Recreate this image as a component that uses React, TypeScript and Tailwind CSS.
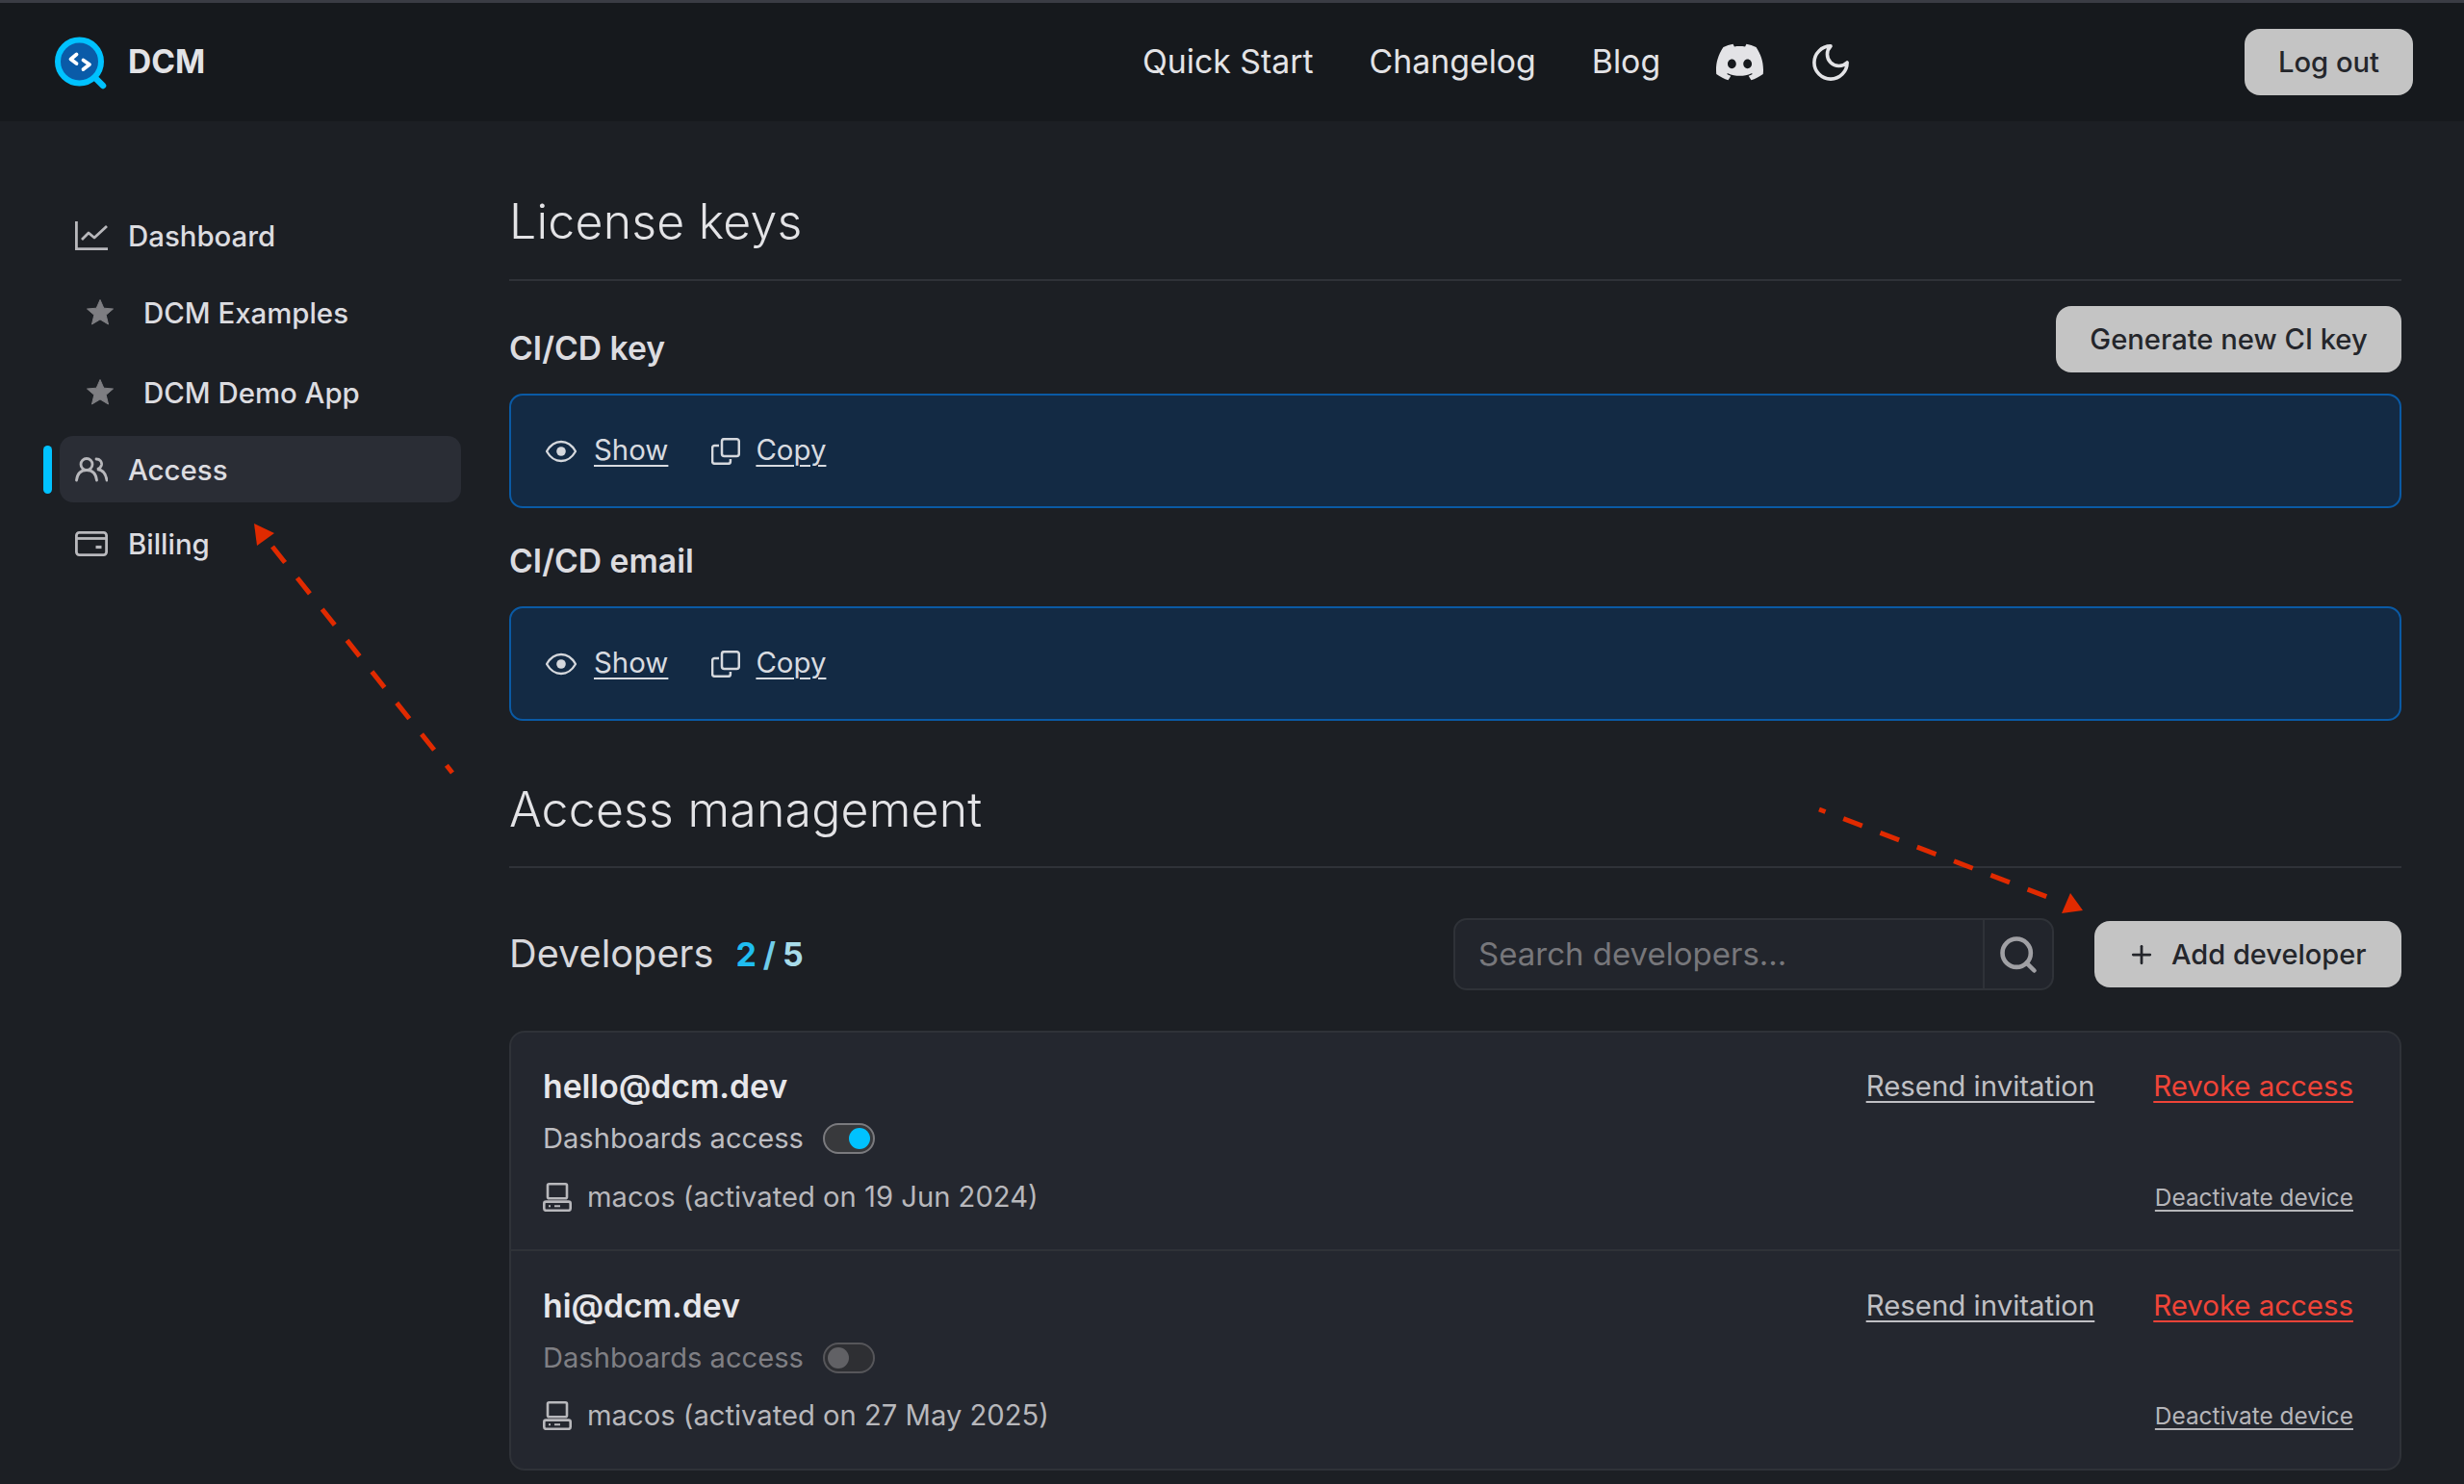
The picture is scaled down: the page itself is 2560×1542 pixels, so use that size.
import { Search, Plus } from "lucide-react";
import { SiDiscord } from "react-icons/si";

function Logo() {
  return (
    <svg width="56" height="56" viewBox="0 0 56 56" className="shrink-0">
      <line x1="43" y1="44" x2="51" y2="52" stroke="#00c2ff" strokeWidth="6.5" strokeLinecap="round" />
      <circle cx="26.5" cy="27" r="22.5" fill="#0a5ba8" stroke="#00c2ff" strokeWidth="6" />
      <path d="M23.5 19.5 L17.5 24.5 L23.5 29" fill="none" stroke="#fff" strokeWidth="3.8" strokeLinecap="round" strokeLinejoin="round" />
      <path d="M30.5 25.5 L37 30 L30.5 35" fill="none" stroke="#fff" strokeWidth="3.8" strokeLinecap="round" strokeLinejoin="round" />
    </svg>
  );
}

function MoonIcon() {
  return (
    <svg width="38" height="38" viewBox="2 2 20 20" fill="none" stroke="#e3e3e6" strokeWidth="1.9" strokeLinejoin="round" className="ml-[-7px]">
      <path d="M12 3a6 6 0 0 0 9 9 9 9 0 1 1-9-9Z" />
    </svg>
  );
}

function ChartIcon() {
  return (
    <svg width="34" height="30" viewBox="0 0 34 30" fill="none" stroke="#b8b8bc" strokeWidth="2.8">
      <path d="M1.4 0 V28.6 H34" />
      <path d="M7 19 L14 12 L20 17 L33 5" strokeLinejoin="round" />
    </svg>
  );
}

function UsersIcon() {
  return (
    <svg width="34" height="26" viewBox="0 0 34 26" fill="none" stroke="#b8b8bc" strokeWidth="2.8" strokeLinecap="round">
      <circle cx="12" cy="7.5" r="6" />
      <path d="M1.5 24 C2.5 16 7 13.5 12 13.5 C17 13.5 21.5 16 22.5 24" />
      <path d="M22 2 C26 2 28 5 27.5 8 C27 10.5 25 12 23 12.5 C28 13 32 17 33 24" />
    </svg>
  );
}

function CardIcon() {
  return (
    <svg width="34" height="26" viewBox="0 0 34 26" fill="none" stroke="#b8b8bc" strokeWidth="2.8">
      <rect x="1.4" y="1.4" width="31.2" height="23.2" rx="3" />
      <path d="M1.4 7.5 H32.6" />
      <path d="M21.5 16.5 H27.5" strokeWidth="3.2" />
    </svg>
  );
}

function StarIcon() {
  return (
    <svg width="28" height="27" viewBox="0 0 28 27" fill="#7e7e82">
      <path d="M14 0.5 L17.8 9.2 L27.5 10 L20.2 16.3 L22.5 26 L14 20.9 L5.5 26 L7.8 16.3 L0.5 10 L10.2 9.2 Z" stroke="#7e7e82" strokeWidth="1" strokeLinejoin="round" />
    </svg>
  );
}

function EyeIcon() {
  return (
    <svg width="32" height="24" viewBox="0 0 32 24" fill="none" stroke="#d5d8dd" strokeWidth="2.3">
      <path d="M1 12 C5 5 10 2 16 2 C22 2 27 5 31 12 C27 19 22 22 16 22 C10 22 5 19 1 12 Z" strokeLinejoin="round" />
      <circle cx="16" cy="12" r="4.8" fill="#d5d8dd" stroke="none" />
    </svg>
  );
}

function CopyIcon() {
  return (
    <svg width="30" height="28" viewBox="0 0 30 28" fill="none" stroke="#d5d8dd" strokeWidth="2.5">
      <rect x="11" y="1.2" width="17.8" height="17.8" rx="2.5" />
      <path d="M8 8 H3.5 A2.4 2.4 0 0 0 1.1 10.4 V24.4 A2.4 2.4 0 0 0 3.5 26.8 H17.5 A2.4 2.4 0 0 0 19.9 24.4 V22" />
    </svg>
  );
}

function DeviceIcon() {
  return (
    <svg width="30" height="30" viewBox="0 0 30 30" fill="none" stroke="#b8b8bc" strokeWidth="2.6" className="shrink-0">
      <rect x="5" y="1.3" width="20" height="15" rx="1.5" />
      <rect x="1.3" y="19.6" width="27.4" height="9.2" rx="2" />
      <path d="M6 24.2 H8 M12 24.2 H18" strokeWidth="2" />
    </svg>
  );
}

function KeyBox() {
  return (
    <div className="mt-[22px] flex h-[119px] items-center rounded-[14px] border-2 border-[#0a5aa5] bg-[#132a44] pl-[36px] text-[29.4px] text-[#d8dbe0]">
      <EyeIcon />
      <span className="ml-[18px] underline underline-offset-[5px] decoration-2">Show</span>
      <span className="ml-[45px]"><CopyIcon /></span>
      <span className="ml-[16px] underline underline-offset-[5px] decoration-2">Copy</span>
    </div>
  );
}

function SideRow({ icon, label, active, star, mt }: { icon: React.ReactNode; label: string; active?: boolean; star?: boolean; mt: string }) {
  return (
    <div className={`flex items-center ${mt}`}>
      <div className={`h-[50px] w-[9px] rounded-full ${active ? "bg-[#00c2ff]" : ""}`} />
      <div className={`ml-[8px] flex h-[69px] w-[417px] items-center rounded-[14px] ${star ? "pl-[28px]" : "pl-[16px]"} ${active ? "bg-[#2a2d35]" : ""}`}>
        <span className="flex w-[34px] justify-start">{icon}</span>
        <span className={`${star ? "ml-[25px]" : "ml-[21px]"} mt-[3px] text-[29.4px] font-medium text-[#dcdce0]`}>{label}</span>
      </div>
    </div>
  );
}

function DevRow({ email, date, on, border, pt, macMt, pb }: { email: string; date: string; on: boolean; border?: boolean; pt: string; macMt: string; pb: string }) {
  return (
    <div className={`flex justify-between pl-[33px] pr-[48px] ${pb} ${pt} ${border ? "border-b-2 border-[#2f3238]" : ""}`}>
      <div className="flex flex-col">
        <div className="text-[33.7px] font-semibold leading-[48px] text-[#e6e6ea]">{email}</div>
        <div className={`mt-[10px] flex h-[40px] items-center text-[29.1px] ${on ? "text-[#bdbdc1]" : "text-[#7f7f84]"}`}>
          Dashboards access
          <span className={`relative ml-[20px] h-[32px] w-[54px] rounded-full border-2 ${on ? "border-[#7a7a7e] bg-[#38393c]" : "border-[#56565a] bg-[#2e2f33]"}`}>
            <span className={`absolute top-[3px] h-[22px] w-[22px] rounded-full ${on ? "right-[3px] bg-[#00c2ff]" : "left-[3px] bg-[#616165]"}`} />
          </span>
        </div>
        <div className={`${macMt} flex h-[40px] items-center text-[29.2px] text-[#b8b8bc]`}>
          <DeviceIcon />
          <span className="ml-[16px]">macos (activated on {date})</span>
        </div>
      </div>
      <div className="flex flex-col items-end justify-between">
        <div className="flex h-[48px] items-center gap-[61px] text-[29.4px]">
          <span className="text-[#c0c0c4] underline underline-offset-[5px] decoration-2">Resend invitation</span>
          <span className="text-[#f04438] underline underline-offset-[5px] decoration-2">Revoke access</span>
        </div>
        <div className="flex h-[40px] items-center text-[24.4px] text-[#b5b5b9] underline underline-offset-[4px] decoration-2">Deactivate device</div>
      </div>
    </div>
  );
}

export default function App() {
  return (
    <div className="relative flex h-[1542px] w-full flex-col overflow-hidden bg-[#1c1f24] [font-family:Inter,sans-serif]">
      <header className="flex h-[126px] shrink-0 items-center border-t-[3px] border-[#3a3c44] bg-[#16191d] pl-[56px] pr-[53px]">
        <div className="flex w-[1131px] items-center">
          <Logo />
          <span className="ml-[21px] text-[33.5px] font-bold text-[#e3e3e6]">DCM</span>
        </div>
        <nav className="flex items-center gap-[58px] text-[33.8px] text-[#e3e3e6]">
          <span>Quick Start</span>
          <span>Changelog</span>
          <span>Blog</span>
          <SiDiscord size={49} color="#e3e3e6" />
          <MoonIcon />
        </nav>
        <button className="ml-auto flex h-[69px] w-[175px] items-center justify-center rounded-[16px] bg-[#c4c4c4] text-[29.2px] font-medium text-[#24262b]">Log out</button>
      </header>
      <div className="flex flex-1">
        <aside className="w-[529px] shrink-0 pl-[45px] pt-[84px]">
          <SideRow icon={<ChartIcon />} label="Dashboard" mt="" />
          <SideRow icon={<StarIcon />} label="DCM Examples" star mt="mt-[11px]" />
          <SideRow icon={<StarIcon />} label="DCM Demo App" star mt="mt-[14px]" />
          <SideRow icon={<UsersIcon />} label="Access" active mt="mt-[11px]" />
          <SideRow icon={<CardIcon />} label="Billing" mt="mt-[8px]" />
        </aside>
        <main className="w-[1966px]">
          <div className="mt-[68px] h-[98px] border-b-2 border-[#2f3238] text-[50px] font-[350] leading-[72px] tracking-[0.2px] text-[#e3e3e6]">License keys</div>
          <div className="mt-[26px] flex items-end justify-between">
            <div className="text-[33.7px] font-semibold leading-[50px] text-[#dcdce0]">CI/CD key</div>
            <button className="flex h-[69px] w-[359px] items-center justify-center rounded-[16px] bg-[#c4c4c4] text-[29.2px] font-medium text-[#24262b]">Generate new CI key</button>
          </div>
          <KeyBox />
          <div className="mt-[30px] text-[33.7px] font-semibold leading-[50px] text-[#dcdce0]">CI/CD email</div>
          <KeyBox />
          <div className="mt-[56px] h-[97px] border-b-2 border-[#2f3238] text-[50px] font-[350] leading-[72px] tracking-[0.2px] text-[#e3e3e6]">Access management</div>
          <div className="mt-[52px] flex h-[75px] items-center">
            <span className="text-[39.7px] text-[#d8d8dc]">Developers</span>
            <span className="ml-[23px] flex gap-[7px] text-[34px] font-bold">
              <span className="text-[#1fbdf0]">2</span>
              <span className="text-[#6fcdeb]">/</span>
              <span className="text-[#a8dcea]">5</span>
            </span>
            <div className="ml-auto flex h-[75px] w-[624px] rounded-[14px] border-2 border-[#2f3238] bg-[#22252c]">
              <input placeholder="Search developers..." className="min-w-0 flex-1 bg-transparent pl-[24px] text-[33px] outline-none placeholder:text-[#77777b]" />
              <div className="flex w-[72px] items-center justify-center border-l-2 border-[#2f3238]">
                <Search size={44} strokeWidth={2.5} color="#a0a0a4" />
              </div>
            </div>
            <button className="ml-[42px] flex h-[69px] w-[319px] items-center rounded-[16px] bg-[#c4c4c4] pl-[34px] text-[29px] font-medium text-[#24262b]">
              <Plus size={30} strokeWidth={2.2} />
              <span className="ml-[16px]">Add developer</span>
            </button>
          </div>
          <div className="mt-[42px] rounded-[16px] border-2 border-[#2f3238] bg-[#24272f]">
            <DevRow email="hello@dcm.dev" date="19 Jun 2024" on border pt="pt-[32px]" macMt="mt-[21px]" pb="pb-[34px]" />
            <DevRow email="hi@dcm.dev" date="27 May 2025" on={false} pt="pt-[33px]" macMt="mt-[20px]" pb="pb-[35px]" />
          </div>
        </main>
      </div>
      <svg className="pointer-events-none absolute left-0 top-0" width="2560" height="1542" fill="none">
        <path d="M283 568 L470 803" stroke="#e02a00" strokeWidth="5" strokeDasharray="21 20.5" />
        <polygon points="264,544 285,554 267,567" fill="#e02a00" />
        <path d="M1890 841 L2135 935" stroke="#e02a00" strokeWidth="5" strokeDasharray="7 20 21 20 21 20 21 20 21 20 21 20 21 20" />
        <polygon points="2151,928 2164,946 2142,949" fill="#e02a00" />
      </svg>
    </div>
  );
}
